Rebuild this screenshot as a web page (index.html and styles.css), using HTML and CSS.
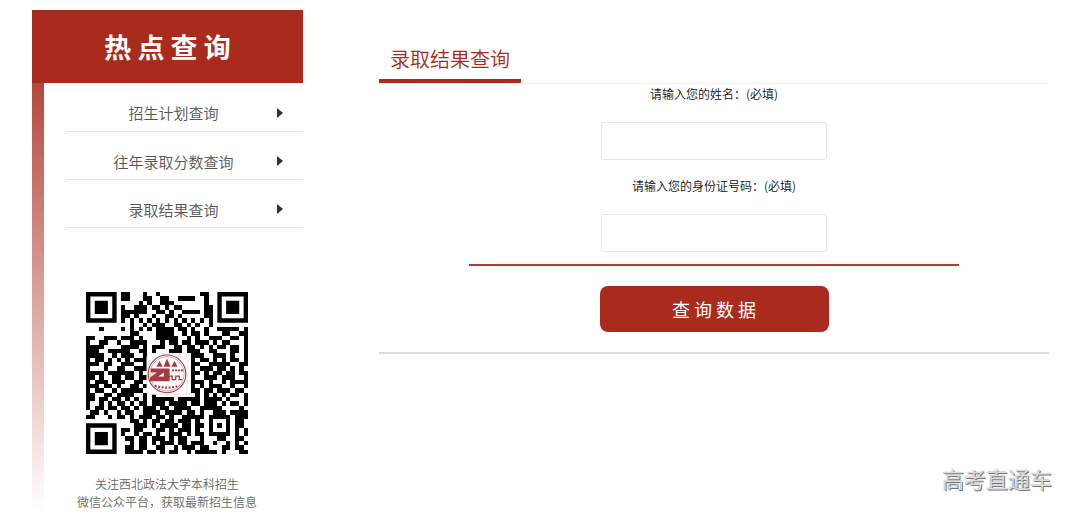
FILE: index.html
```html
<!DOCTYPE html>
<html lang="zh-CN">
	<head>
		<meta charset="UTF-8" />
		<meta name="viewport" content="width=device-width, initial-scale=1.0" />
		<title>录取结果查询</title>
		<link rel="stylesheet" href="styles.css">
	</head>
	<body>
		<div class="container">
			<aside class="sidebar">
				<h2 class="sidebar-title">热 点 查 询</h2>
				<div class="sidebar-body">
					<ul class="menu">
						<li><a href="#plan"><span>招生计划查询</span></a></li>
						<li><a href="#score"><span>往年录取分数查询</span></a></li>
						<li><a href="#result"><span>录取结果查询</span></a></li>
					</ul>

					<div class="qrcode">
						<svg class="qr" viewBox="0 0 37 37" role="img" aria-label="微信公众平台">
							<path id="qrModules" shape-rendering="crispEdges" />
							<!-- finder patterns -->
							<g fill="none" stroke="#000">
								<path d="M.5 .5h6v6h-6zM30.5 .5h6v6h-6zM.5 30.5h6v6h-6z" />
							</g>
							<path d="M2 2h3v3h-3zM32 2h3v3h-3zM2 32h3v3h-3z" />
							<!-- school badge -->
							<rect x="13.9" y="14.1" width="9.2" height="9.3" rx=".8" fill="#fff" stroke="#ddd" stroke-width=".15" />
							<g fill="none" stroke="#a63a40">
								<circle cx="18.5" cy="18.7" r="4.3" stroke-width=".25" />
								<circle cx="18.5" cy="18.7" r="3.9" stroke-width=".1" />
								<path d="M15.7 21.4q2.8 .9 5.6 0" stroke-width=".5" stroke-dasharray=".45 .35" />
								<path d="M18.9 20v-.8h.8v.8h.8v-.8h.8v.8h.7" stroke-width=".3" />
								<path d="M19.6 17.9h2.6" stroke-width=".4" stroke-dasharray=".5 .2" />
							</g>
							<path fill="#a63a40" d="M16.1 17.1l.7-1.4.7 1.400zM17.700 17.100l.8-1.900.8 1.900zM19.500 17.100l.7-1.400.7 1.400z" />
							<path fill="#a63a40" d="M14.800 17.500h3.200v.8l-1.500 1h1.300v-1.800h1.300v2.900h-4.500v-.9l1.600-1.100h-1.400z" />
						</svg>
						<p>关注西北政法大学本科招生<br />微信公众平台，获取最新招生信息</p>
					</div>
				</div>
			</aside>

			<main class="content">
				<div class="content-head">
					<h1>录取结果查询</h1>
				</div>

				<form class="query-form" action="#" method="post">
					<label for="nameInput">请输入您的姓名：(必填)</label>
					<input type="text" id="nameInput" name="name" required />

					<label for="idInput">请输入您的身份证号码：(必填)</label>
					<input type="text" id="idInput" name="id" required />

					<hr />
					<button type="submit">查 询 数 据</button>
				</form>
			</main>
		</div>

		<div class="watermark">高考直通车</div>

		<script src="script.js"></script>
	</body>
</html>
```
FILE: styles.css
```css
* {
	box-sizing: border-box;
}

body {
	margin: 0;
	font-family: "Noto Sans CJK SC", sans-serif;
	font-size: 12px;
	font-weight: 350;
	color: #333;
	background-color: #fff;
}

.container {
	display: flex;
	gap: 76px;
	align-items: flex-start;
	padding: 10px 31px 0 32px;
}

/* Left column */
.sidebar {
	flex: 0 0 271px;
}

.sidebar-title {
	margin: 0;
	background-color: #a92b1e;
	color: #fff;
	font-size: 27px;
	font-weight: 700;
	line-height: 73px;
	text-align: center;
}

.sidebar-body {
	position: relative;
	padding-left: 34px;
}

/* Fading stripe under the title */
.sidebar-body::before {
	content: "";
	position: absolute;
	top: 0;
	bottom: 0;
	left: 0;
	width: 12px;
	background: linear-gradient(#b5483d, #fff);
}

.menu {
	list-style: none;
	margin: 0;
	padding: 0;
}

.menu a {
	display: flex;
	align-items: center;
	padding: 11px 20px 0 4px;
	height: 48px;
	border-bottom: 1px solid #e6e6e6;
	color: #555;
	font-size: 15px;
	text-decoration: none;
}

.menu li:first-child a {
	height: 49px;
}

.menu span {
	flex: 1;
	text-align: center;
}

.menu a::after {
	content: "";
	border-left: 6px solid #333;
	border-top: 5px solid transparent;
	border-bottom: 5px solid transparent;
}

.qrcode {
	padding: 64px 35px 0 0;
	display: flex;
	flex-direction: column;
	align-items: center;
	color: #666;
	text-align: center;
}

.qr {
	width: 162px;
	height: 162px;
}

.qrcode p {
	margin: 21px 0 0;
	line-height: 18px;
	white-space: nowrap;
}

/* Right column */
.content {
	flex: 1;
	border-bottom: 2px solid #ddd;
}

.content-head {
	display: flex;
	border-bottom: 1px solid #eee;
}

.content-head h1 {
	margin: 0;
	padding: 34px 11px 5px;
	border-bottom: 4px solid #a92b1e;
	color: #a92b1e;
	font-size: 20px;
	font-weight: 350;
	line-height: 30px;
}

.query-form {
	display: flex;
	flex-direction: column;
	align-items: center;
	padding-bottom: 20px;
}

.query-form label {
	line-height: 20px;
	color: #111;
}

.query-form input {
	width: 226px;
	height: 38px;
	margin: 18px 0 16px;
	padding: 0 10px;
	border: 1px solid #e6e6e6;
	border-radius: 3px;
	background-color: #fff;
	font: inherit;
}

.query-form hr {
	width: 73%;
	margin: -4px 0 20px;
	border: none;
	border-top: 2px solid #b5392d;
}

.query-form button {
	width: 229px;
	height: 46px;
	border: none;
	border-radius: 8px;
	background-color: #a92b1e;
	color: #fff;
	font-family: inherit;
	font-size: 18px;
	cursor: pointer;
}

.watermark {
	position: absolute;
	right: 28px;
	bottom: 26px;
	color: #ddd;
	font-size: 22px;
	line-height: 32px;
	text-shadow: 1px 1px 0 #777, 0 0 1px #888;
}
```
FILE: script.js
```js
// One string per row, the corner finder patterns are drawn in the svg
var rows = [
	'........##...#..#.........##.........',
	'........##...##..##..####..#.........',
	'............#.#..###.......#.........',
	'........#..###.##.#.##.....##........',
	'........######..##.#..####.##........',
	'........##.#...#..##.#.....##........',
	'........#.#.#.#.#.#.#.#.#.#.#........',
	'..........#..#.###..##.#.#..#........',
	'...#....#.#.#.#.####.##.#..#..#####.#',
	'..........##....####..#.##.#...##..##',
	'##..###.###.#...#####..#.#..###..##.#',
	'#..##..#..####...#.##.##.###.#.##...#',
	'####....####.#.###..##.##.#.#.##.##.#',
	'###..#####..##.#...###.###..##...##.#',
	'####..#.###..#..........###..###.#..#',
	'#.##.#.#.#.###..........#.##.#.#.##.#',
	'###.##..###..#..........##..#####..##',
	'#...#..##..###..........#.###.##.#.#.',
	'####.######.#...........##.#.##.##.##',
	'##.#..##.##.##..........#..###.###..#',
	'#.###.###..##...........###.#..#.####',
	'###.##.#..##.#..........#.#.###..#..#',
	'#.##..#.#####...........##.##.###.##.',
	'##..##.####..#.#.........#.#.#.#.##.#',
	'##.##.##.#.#.#.#####.#####.####.#...#',
	'#..#.#.##.#.##.###.####.##.###.#.##.#',
	'#.##.##.##.#.###.##.####..#####....#.',
	'.##.#..#.##..####.####.##.#..###.####',
	'##...#.##.#.###.##.#..#####.#####.###',
	'..........##.#.##.##.###.#..#...#.##.',
	'...........###.#.####.##.##.#.#.#.##.',
	'........##.##...##.#.###.#..#...#.#.#',
	'........#..#.##.#..###.#.##.#####.#.#',
	'.........##.##.###.#.##...#...##..##.',
	'..........#.##.#.###.##.###..#..#.#.#',
	'.........##.##..##..#.###.##...##.##.',
	'.........####.##.#.##..#.#####.#...##'
];

var d = '';
rows.forEach(function (row, y) {
	for (var x = 0; x < row.length; x++) {
		if (row[x] === '#') {
			d += 'M' + x + ' ' + y + 'h1v1h-1z';
		}
	}
});
document.getElementById('qrModules').setAttribute('d', d);
```
